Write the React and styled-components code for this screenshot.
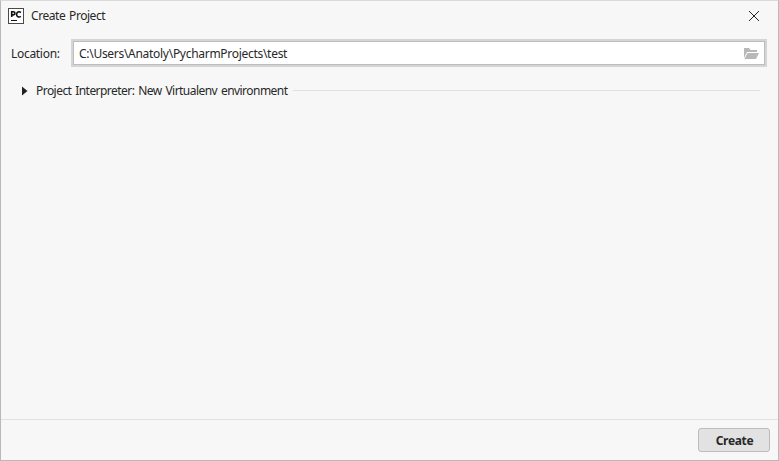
import React from "react";
import styled, { createGlobalStyle } from "styled-components";

const GlobalStyle = createGlobalStyle`
  body { margin: 0; overflow: hidden; }
  *, *::before, *::after { box-sizing: border-box; }
`;

const Dialog = styled.main`
  display: flex;
  flex-direction: column;
  width: 779px;
  height: 461px;
  background: #f7f7f7;
  border: 1px solid #b9b9b9;
  border-top-color: #dadada;
  color: #282828;
  font: 12px/16px "Noto Sans", "Open Sans", sans-serif;
`;

const TitleBar = styled.header`
  display: flex;
  align-items: center;
  height: 29px;
  padding: 0 19px 0 7px;
`;

const Text = styled.span`
  letter-spacing: ${(p) => p.$spacing || 0}px;
  word-spacing: 1.2px;
  white-space: pre;
`;

const Title = styled(Text)`
  flex: 1;
  margin-left: 7px;
`;

const LocationRow = styled.label`
  display: flex;
  align-items: center;
  margin-top: 9px;
  padding: 0 11px 0 10px;
`;

const LocationLabel = styled(Text)`
  width: 60px;
  padding-top: 2px;
`;

const PathField = styled.div`
  display: flex;
  flex: 1;
  align-items: center;
  justify-content: space-between;
  height: 24px;
  margin: 2px;
  padding: 2px 5px 0;
  background: #fff;
  border: 1px solid #bdbdbd;
  box-shadow: 0 0 0 2px #d5d5d5;
`;

const Section = styled.section`
  display: flex;
  align-items: center;
  height: 16px;
  margin: 16px 18px 0 21px;
`;

const SectionTitle = styled(Text)`
  margin-left: 8px;
`;

const Rule = styled.div`
  flex: 1;
  height: 1px;
  margin: 0 0 1px 6px;
  background: #e2e2e2;
`;

const Footer = styled.footer`
  display: flex;
  justify-content: flex-end;
  height: 41px;
  margin-top: auto;
  padding: 8px 8px 0;
  border-top: 1px solid #e1e1e1;
`;

const CreateButton = styled.button`
  width: 72px;
  height: 24px;
  padding: 2px 0 0 1px;
  background: #e2e2e2;
  border: 1px solid #bcbcbc;
  border-radius: 3px;
  color: #282828;
  font: 700 12px/20px "Noto Sans", sans-serif;
`;

const Svg = styled.svg`
  display: block;
  flex: none;
`;

const ArrowSvg = styled(Svg)`
  margin-bottom: 1px;
`;

const AppIcon = () => (
  <Svg width="16" height="16" viewBox="0 0 16 16">
    <rect x=".5" y=".5" width="15" height="15" fill="#fff" stroke="#4a4a4a" />
    <path d="M3.7 9V3.8H5.3C7.5 3.8 7.5 6.9 5.3 6.9H4M12.9 4.5C10.8 3 8.6 4.2 8.6 6.4S10.8 9.7 12.9 8.3" fill="none" stroke="#111" strokeWidth="1.6" />
    <path d="M3 12h6v1H3z" fill="#111" />
  </Svg>
);

const CloseIcon = () => (
  <Svg width="10" height="10" viewBox="0 0 10 10">
    <path d="M0 0 10 10M10 0 0 10" stroke="#222" strokeWidth="1" />
  </Svg>
);

const FolderIcon = () => (
  <Svg width="15" height="12" viewBox="0 0 15 12">
    <path d="M0 0H5L6.5 2H13V4H3L0 10Z" fill="#b8b8b8" />
    <path d="M3.5 5H15L12 11H.5Z" fill="#b8b8b8" />
  </Svg>
);

const Arrow = () => (
  <ArrowSvg width="6" height="10" viewBox="0 0 6 10">
    <path d="M0 .5 5.5 5 0 9.5Z" fill="#222" />
  </ArrowSvg>
);

export default function App() {
  return (
    <>
      <GlobalStyle />
      <Dialog>
        <TitleBar>
          <AppIcon />
          <Title $spacing={-0.45}>Create Project</Title>
          <CloseIcon />
        </TitleBar>
        <LocationRow>
          <LocationLabel $spacing={-0.3}>Location:</LocationLabel>
          <PathField>
            <Text $spacing={-0.29}>C:\Users\Anatoly\PycharmProjects\test</Text>
            <FolderIcon />
          </PathField>
        </LocationRow>
        <Section>
          <Arrow />
          <SectionTitle $spacing={-0.54}>Project Interpreter: New Virtualenv environment</SectionTitle>
          <Rule />
        </Section>
        <Footer>
          <CreateButton>
            <Text $spacing={-0.35}>Create</Text>
          </CreateButton>
        </Footer>
      </Dialog>
    </>
  );
}
